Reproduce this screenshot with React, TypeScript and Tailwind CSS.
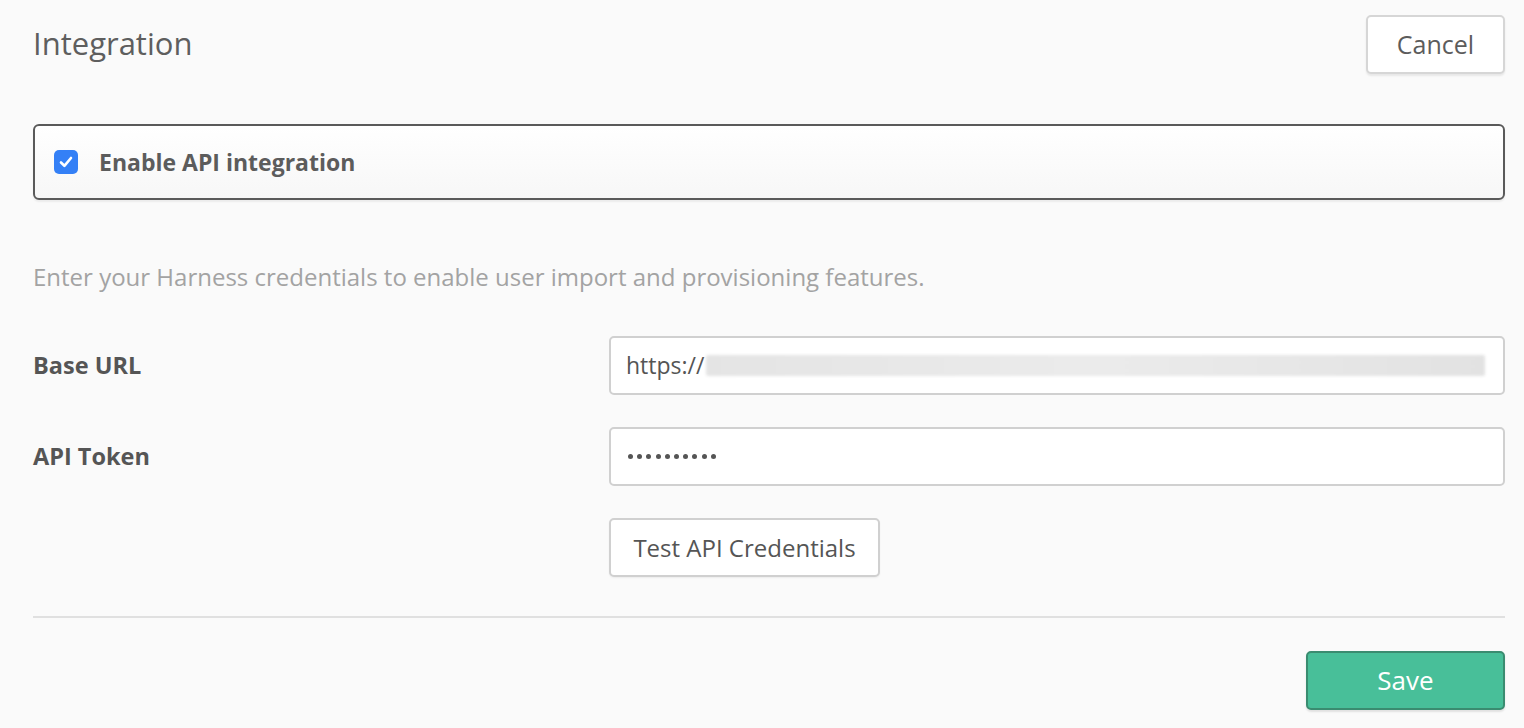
import React from "react";

export default function App() {
  return (
    <div
      className="min-h-[728px] w-full bg-[#fafafa] text-[#5c5c5c]"
      style={{ fontFamily: "'Open Sans', Lato, sans-serif" }}
    >
      <div className="pl-[33px] pr-[19px]">
        <div className="flex items-start justify-between pt-[15px]">
          <h1 className="mt-[9px] text-[31px] leading-[38px] font-normal text-[#5e5e5e]">Integration</h1>
          <button className="h-[59px] w-[139px] rounded-[5px] border-2 border-[#d6d6d6] bg-white text-[25px] text-[#5c5c5c] shadow-[0_2px_2px_rgba(0,0,0,0.08)]">
            Cancel
          </button>
        </div>

        <div className="mt-[50px] flex h-[76px] items-center rounded-[6px] border-2 border-[#5a5a5a] bg-gradient-to-b from-white to-[#f7f7f7] pl-[19px] shadow-[0_2px_2px_rgba(0,0,0,0.06)]">
          <span className="flex h-[24px] w-[24px] items-center justify-center rounded-[5px] bg-[#3480f6]">
            <svg width="18" height="18" viewBox="0 0 18 18" fill="none">
              <path d="M4 9.5 L7.4 12.8 L14 5" stroke="white" strokeWidth="2.6" strokeLinecap="round" strokeLinejoin="round" />
            </svg>
          </span>
          <span className="ml-[21px] text-[23px] font-bold text-[#5c5c5c]">Enable API integration</span>
        </div>

        <p className="mt-[62px] text-[24px] leading-[30px] text-[#a3a3a3]">
          Enter your Harness credentials to enable user import and provisioning features.
        </p>

        <div className="mt-[44px] flex flex-col gap-[32px]">
          <div className="flex items-center">
            <label className="w-[576px] text-[23.5px] font-bold text-[#555]">Base URL</label>
            <div className="relative flex h-[59px] flex-1 items-center overflow-hidden rounded-[5px] border-2 border-[#d0d0d0] bg-white pl-[15px] text-[23px] text-[#555]">
              <span>https://</span>
              <span className="ml-[2px] h-[21px] flex-1 mr-[18px] rounded-[2px] bg-gradient-to-r from-[#e4e4e4] via-[#ebebeb] to-[#e2e2e2] blur-[1.5px]" />
            </div>
          </div>
          <div className="flex items-center">
            <label className="w-[576px] text-[23.5px] font-bold text-[#555]">API Token</label>
            <div className="flex h-[59px] flex-1 items-center gap-[4.2px] rounded-[5px] border-2 border-[#d0d0d0] bg-white pl-[17px]">
              {Array.from({ length: 10 }).map((_, i) => (
                <span key={i} className="h-[5px] w-[5px] rounded-full bg-[#555]" />
              ))}
            </div>
          </div>
          <div className="flex">
            <div className="w-[576px]" />
            <button className="h-[59px] w-[271px] rounded-[5px] border-2 border-[#d0d0d0] bg-white text-[24px] text-[#555] shadow-[0_1px_2px_rgba(0,0,0,0.06)]">
              Test API Credentials
            </button>
          </div>
        </div>

        <div className="mt-[39px] h-[2px] bg-[#e0e0e0]" />

        <div className="mt-[33px] flex justify-end">
          <button className="h-[59px] w-[199px] rounded-[5px] border-2 border-[#3a8c70] bg-[#48bf99] text-[26px] text-white shadow-[0_2px_2px_rgba(0,0,0,0.1)]">
            Save
          </button>
        </div>
      </div>
    </div>
  );
}
